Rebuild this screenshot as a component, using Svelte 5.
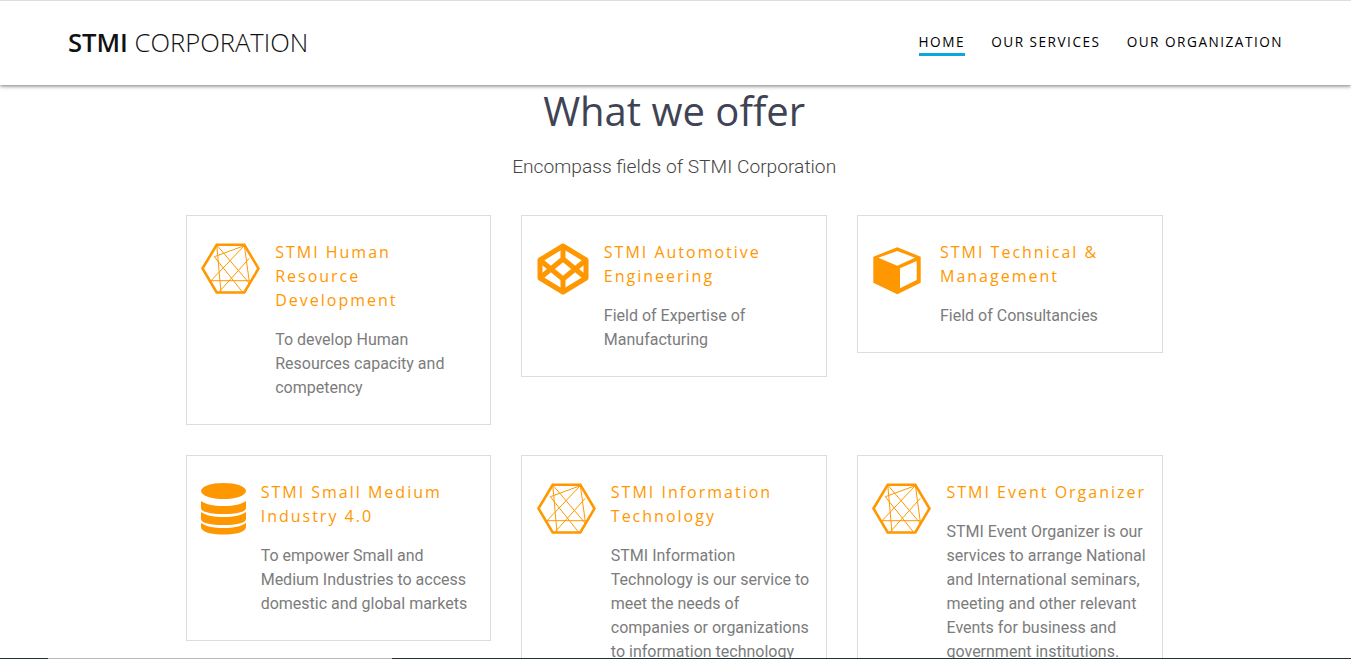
<script>
  const nav = ['Home', 'Our Services', 'Our Organization'];

  const services = [
    {
      title: 'STMI Human Resource Development',
      text: 'To develop Human Resources capacity and competency',
      icon: 'mesh'
    },
    {
      title: 'STMI Automotive Engineering',
      text: 'Field of Expertise of Manufacturing',
      icon: 'codepen'
    },
    {
      title: 'STMI Technical & Management',
      text: 'Field of Consultancies',
      icon: 'cube'
    },
    {
      title: 'STMI Small Medium Industry 4.0',
      text: 'To empower Small and Medium Industries to access domestic and global markets',
      icon: 'database'
    },
    {
      title: 'STMI Information Technology',
      text: 'STMI Information Technology is our service to meet the needs of companies or organizations to information technology',
      icon: 'mesh'
    },
    {
      title: 'STMI Event Organizer',
      text: 'STMI Event Organizer is our services to arrange National and International seminars, meeting and other relevant Events for business and government institutions.',
      icon: 'mesh'
    }
  ];
</script>

<div class="page">
  <header class="topbar">
    <a class="brand" href="#top"><b>STMI</b> CORPORATION</a>
    <nav class="menu">
      {#each nav as item, i}
        <a href="#top" class:active={i === 0}>{item}</a>
      {/each}
    </nav>
  </header>

  <main class="offer">
    <h2>What we offer</h2>
    <p class="lead">Encompass fields of STMI Corporation</p>

    <div class="grid">
      {#each services as s}
        <article class="card">
          <div class="icon icon-{s.icon}">
            {#if s.icon === 'mesh'}
              <svg width="59" height="52" viewBox="0 0 59 52" fill="none" stroke="#ff9800">
                <path d="M1.500 25.500 15.700 1.800h27.600l14.200 23.700-14.200 24h-27.600z" stroke-width="2.600" />
                <path d="M15.700 2 48.300 40.300M48.300 15.300 18.300 48.700M43.300 2.700 13.300 13.700 41.700 49.300M15.700 1.300 20 49.300M43.300 2 48.300 38.700M43.300 2.700 10 37.700H48.300" stroke-width="1" />
              </svg>
            {:else if s.icon === 'codepen'}
              <svg width="52" height="52" viewBox="0 0 52 52" fill="none" stroke="#ff9800" stroke-width="5" stroke-linejoin="round">
                <path d="M26 3 49 17v18L26 49 3 35V17z" />
                <path d="M26 3v13M26 36v13M3 17l23 19 23-19M3 35l23-19 23 19" />
              </svg>
            {:else if s.icon === 'cube'}
              <svg width="48" height="48" viewBox="0 0 48 48">
                <path fill="#ff9800" d="M24.300.3 47.700 9.700v26L24.300 47.300.3 35.700V9.700z" />
                <path fill="#fff" d="M24.300 4 42 10.700 24.300 18.700 5.300 10.700zM27 21.300 43.700 14v19L27 41.300z" />
              </svg>
            {:else}
              <svg width="45" height="52" viewBox="0 0 45 52" fill="#ff9800">
                <ellipse cx="22.500" cy="8" rx="22.500" ry="8" />
                <path d="M0 18c4 3 12 5 22.500 5S41 21 45 18v7c0 4-10 6-22.500 6S0 29 0 25z" />
                <path d="M0 29c4 3 12 5 22.500 5S41 32 45 29v7c0 4-10 6-22.500 6S0 40 0 36z" />
                <path d="M0 40c4 3 12 5 22.500 5S41 43 45 40v4c0 5-10 7.500-22.500 7.500S0 49 0 44z" />
              </svg>
            {/if}
          </div>
          <div class="body">
            <h3>{s.title}</h3>
            <p>{s.text}</p>
          </div>
        </article>
      {/each}
    </div>
  </main>

  <div class="edge">
    <span class="seg-dark seg-left"></span>
    <span class="seg-grey"></span>
    <span class="seg-dark seg-right"></span>
  </div>
</div>

<style>
  :global(body) {
    margin: 0;
    background: #fff;
  }
  .page {
    position: relative;
    height: 659px;
    overflow: hidden;
  }
  .topbar {
    height: 84px;
    border-top: 1px solid #ddd;
    background: #fff;
    box-shadow: 0 1px 4px rgba(0, 0, 0, 0.55);
    display: flex;
    align-items: center;
    justify-content: space-between;
    padding: 0 68px;
    position: relative;
  }
  .brand {
    font-family: 'Open Sans', sans-serif;
    font-size: 25.6px;
    font-weight: 300;
    color: #111;
    text-decoration: none;
    margin-top: -2px;
  }
  .brand b {
    font-weight: 600;
  }
  .menu {
    display: flex;
    gap: 26.2px;
    margin-top: -3px;
  }
  .menu a {
    font-family: 'Open Sans', sans-serif;
    font-size: 13.6px;
    font-weight: 400;
    letter-spacing: 1.5px;
    text-transform: uppercase;
    color: #000;
    text-decoration: none;
    padding: 4px 0 2px;
    border-bottom: 3px solid transparent;
  }
  .menu a.active {
    border-bottom-color: #0ea5dc;
  }
  .offer {
    width: 977px;
    margin-left: 185.67px;
  }
  h2 {
    margin: 0;
    font-family: 'Open Sans', sans-serif;
    font-size: 40px;
    font-weight: 400;
    line-height: 52px;
    color: #3f4454;
    text-align: center;
  }
  .lead {
    margin: 15px 0 34px;
    font-family: Roboto, sans-serif;
    font-size: 19.2px;
    font-weight: 300;
    line-height: 29px;
    color: #444;
    text-align: center;
  }
  .grid {
    display: grid;
    grid-template-columns: repeat(3, 1fr);
    column-gap: 30px;
    row-gap: 30px;
    align-items: start;
  }
  .card {
    box-sizing: border-box;
    display: flex;
    gap: 15px;
    padding: 24px 14px 24px;
    border: 1px solid #ddd;
    background: #fff;
  }
  .icon {
    flex: none;
    margin-top: 3px;
  }
  .icon svg {
    display: block;
  }
  .icon-mesh,
  .icon-codepen {
    margin-left: 0.5px;
  }
  .icon-cube {
    margin: 7px 4px 0 1px;
  }
  h3 {
    margin: 0 0 16px;
    font-family: 'Open Sans', sans-serif;
    font-size: 16px;
    font-weight: 400;
    line-height: 24px;
    letter-spacing: 2px;
    color: #ff9800;
  }
  .body p {
    margin: 0;
    font-family: Roboto, sans-serif;
    font-size: 16px;
    font-weight: 400;
    line-height: 24px;
    color: #7c7c7c;
  }
  .edge {
    position: absolute;
    left: 0;
    right: 0;
    bottom: 0;
    height: 1px;
    display: flex;
  }
  .seg-dark {
    background: #1e3238;
  }
  .seg-left {
    width: 48px;
  }
  .seg-grey {
    width: 344px;
    background: #bbb;
  }
  .seg-right {
    flex: 1;
  }
</style>
